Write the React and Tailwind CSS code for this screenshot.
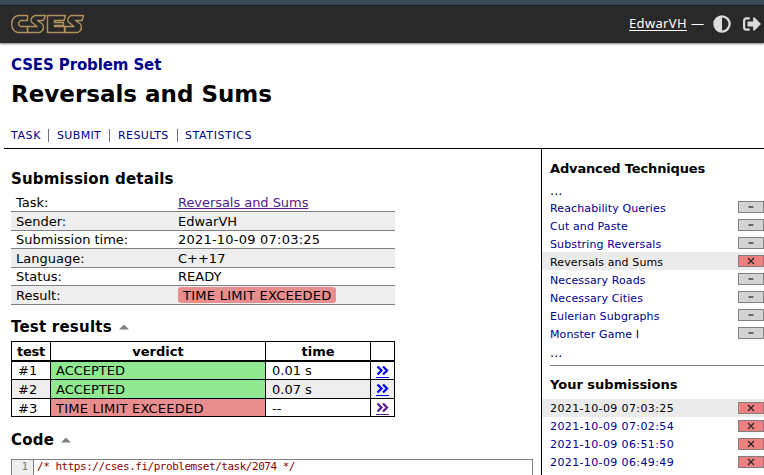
import React from "react";

const verdana = "font-['DejaVu_Sans',sans-serif]";

const details = [
  ["Task:", "Reversals and Sums", "h-[19px]"],
  ["Sender:", "EdwarVH", "h-[19px] bg-[#eeeeee]"],
  ["Submission time:", "2021-10-09 07:03:25", "h-[18px]"],
  ["Language:", "C++17", "h-[19px] bg-[#eeeeee]"],
  ["Status:", "READY", "h-[18px]"],
  ["Result:", "TIME LIMIT EXCEEDED", "h-[19px] bg-[#eeeeee]"],
];

const results = [
  { n: "#1", verdict: "ACCEPTED", time: "0.01 s", h: "h-[18px] leading-[17px]", link: "text-[#0000ee]" },
  { n: "#2", verdict: "ACCEPTED", time: "0.07 s", h: "h-[19px] leading-[19px]", alt: true, link: "text-[#0000ee]" },
  { n: "#3", verdict: "TIME LIMIT EXCEEDED", time: "--", h: "h-[18px] leading-[19px]", link: "text-[#551a8b]" },
];

const tasks = [
  "Reachability Queries",
  "Cut and Paste",
  "Substring Reversals",
  "Reversals and Sums",
  "Necessary Roads",
  "Necessary Cities",
  "Eulerian Subgraphs",
  "Monster Game I",
];

const submissions = [
  "2021-10-09 07:03:25",
  "2021-10-09 07:02:54",
  "2021-10-09 06:51:50",
  "2021-10-09 06:49:49",
];

function Logo() {
  return (
    <svg width="74" height="21" viewBox="0 0 74 21" fill="none" stroke="#b0925f" strokeWidth="1.4" strokeLinejoin="round">
      <path d="M16.500 1.500H7Q0.700 3 0.700 10Q1 17.500 7 18.500H16.500V12.500H9.500Q5.500 10 9.500 6.500H16.500Z" />
      <path d="M34.500 1.500H24Q18.500 4 20.500 8L26 12.500H16.500V18.500H29Q34.500 15 31.500 10L26.500 6.500H32.500Z" />
      <path d="M36.500 1.500H54.500L53 6.500H43.500V8.500H52.500V11.500H43.500V12.500H54V18.500H36.500Z" />
      <path d="M72.500 1.500H60Q55.500 4 57.500 8L63 12.500H53.500V18.500H67Q72.500 15 69.500 10L64.500 6.500H71Z" />
    </svg>
  );
}

function Header() {
  return (
    <header>
      <div className="h-[5px] bg-[#3a4754]" />
      <div className="flex h-[38px] items-center border-t border-[#1b1b1b] bg-[#292929] pl-[11px] shadow-[0_1px_2px_rgba(0,0,0,0.5)]">
        <Logo />
        <div className="ml-auto flex items-center pr-[3px] font-['Noto_Sans',sans-serif] text-[13px] text-white">
          <a className="-mt-px tracking-[0.35px] underline underline-offset-2">EdwarVH</a>
          <span className="-mt-px ml-1">—</span>
          <svg className="-mt-px ml-[9px]" width="18" height="18" viewBox="0 0 512 512" fill="#dcdcdc">
            <path d="M8 256a248 248 0 1 0 496 0 248 248 0 1 0-496 0zm248 184V72a184 184 0 0 1 0 368z" />
          </svg>
          <svg className="-mt-px ml-[12px]" width="18" height="18" viewBox="0 0 512 512" fill="#dcdcdc">
            <path d="M497 273L329 441c-15 15-41 4.500-41-17v-96H152c-13.300 0-24-10.700-24-24v-96c0-13.300 10.700-24 24-24h136V88c0-21.400 25.900-32 41-17l168 168c9.300 9.400 9.300 24.600 0 34zM192 436v-40c0-6.600-5.400-12-12-12H96c-17.700 0-32-14.300-32-32V160c0-17.700 14.300-32 32-32h84c6.600 0 12-5.400 12-12V76c0-6.600-5.400-12-12-12H96c-53 0-96 43-96 96v192c0 53 43 96 96 96h84c6.600 0 12-5.400 12-12z" />
          </svg>
        </div>
      </div>
    </header>
  );
}

function Row({ label, active, fail, spacing }) {
  return (
    <div className={`flex h-[18px] items-center pl-2 text-[11px] ${active ? "bg-[#ebebeb] text-black" : "text-[#00008b]"}`}>
      <span className={`leading-4 ${spacing}`}>{label}</span>
      <span className={`ml-auto mb-px flex h-3 w-[26px] items-center justify-center border border-[#808080] ${fail ? "bg-[#f08080]" : "bg-[#d3d3d3]"}`}>
        <svg width="8" height="8" viewBox="0 0 8 8" stroke="#222" strokeWidth="1.2">
          {fail ? <path d="M1 1L7 7M7 1L1 7" /> : <path d="M1.500 4H6.500" />}
        </svg>
      </span>
    </div>
  );
}

function Up() {
  return (
    <svg width="10" height="6" viewBox="0 0 10 6" fill="#808080">
      <path d="M0 5.500L5 0.500L10 5.500Z" />
    </svg>
  );
}

export default function App() {
  return (
    <div className={`h-[475px] w-[764px] overflow-hidden bg-white text-black ${verdana}`}>
      <Header />
      <div className="flex h-[105px] flex-col pl-[11px] pt-[13px]">
        <div className="text-[15px] font-bold leading-[19px] tracking-[-0.12px] text-[#00008b]">CSES Problem Set</div>
        <h1 className="mt-[4px] text-[23px] font-bold leading-[30px]">Reversals and Sums</h1>
        <nav className="mt-[19px] flex items-center text-[11px] leading-[15px] text-[#00008b]">
          <a className="w-[37px] tracking-[0.6px]">TASK</a><i className="h-[13px] w-px bg-gray-500" />
          <a className="w-[60px] pl-[8px] tracking-[0.35px]">SUBMIT</a><i className="h-[13px] w-px bg-gray-500" />
          <a className="w-[67px] pl-[8px] tracking-[0.4px]">RESULTS</a><i className="h-[13px] w-px bg-gray-500" />
          <a className="pl-[7px] tracking-[0.6px]">STATISTICS</a>
        </nav>
      </div>
      <div className="ml-1 flex h-[327px] border-t border-black">
        <main className="w-[537px] pl-[7px]">
          <h2 className="pt-[20px] text-[15px] font-bold leading-[20px] tracking-[0.17px]">Submission details</h2>
          <div className="mt-[4px] w-[384px] text-[13px]">
            {details.map(([k, v, c], i) => (
              <div key={k} className={`flex items-center border-b border-[#808080] pl-[5px] leading-[18px] ${c}`}>
                <span className={`w-[162px] ${i === 2 ? "" : "pt-px"}`}>{k}</span>
                {i === 0 ? <a className="pt-px tracking-[-0.05px] text-[#551a8b] underline">{v}</a>
                  : i === 5 ? <span className="flex h-4 w-[158px] items-center rounded-[3px] bg-[#e88e8e] pl-[5px] pt-px tracking-[0.27px]">{v}</span>
                  : <span className={i === 2 ? "tracking-[0.22px]" : "pt-px"}>{v}</span>}
              </div>
            ))}
          </div>
          <h2 className="mt-[12px] flex items-center gap-[7px] text-[15px] font-bold leading-[20px] tracking-[0.22px]"><span>Test results</span><Up /></h2>
          <div className="mt-[4px] w-[384px] border-l border-t border-black text-[13px]">
            <div className="grid h-[20px] grid-cols-[39px_215px_105px_24px] border-b-2 border-black text-center font-bold leading-[20px]">
              {["test", "verdict", "time", ""].map((t) => <span key={t} className={`h-[18px] border-r border-black ${t === "test" ? "tracking-[-0.3px]" : ""}`}>{t}</span>)}
            </div>
            {results.map((r) => (
              <div key={r.n} className={`grid grid-cols-[39px_215px_105px_24px] border-b border-black ${r.h} ${r.alt ? "bg-[#eeeeee]" : ""}`}>
                <span className="overflow-hidden border-r border-black pl-[6px]">{r.n}</span>
                <span className={`overflow-hidden border-r border-black pl-[5px] ${r.verdict === "ACCEPTED" ? "bg-[#90e890]" : "bg-[#e88e8e] tracking-[0.22px]"}`}>{r.verdict}</span>
                <span className="overflow-hidden border-r border-black pl-[6px]">{r.time}</span>
                <a className={`flex flex-col items-center border-r border-black pt-[4px] ${r.link}`}>
                  <svg width="13" height="12" viewBox="0 0 13 12" fill="none" stroke="currentColor"><path strokeWidth="2.2" d="M1.500 0.500L5.500 4.500L1.500 8.500M7 0.500L11 4.500L7 8.500" /><path d="M0 11.500H13" /></svg>
                </a>
              </div>
            ))}
          </div>
          <h2 className="mt-[13px] flex items-center gap-[7px] text-[15px] font-bold leading-[20px] tracking-[0.22px]"><span>Code</span><Up /></h2>
          <div className="mt-[9px] flex h-[30px] w-[522px] border border-[#808080] font-['DejaVu_Sans_Mono',monospace] text-[11px] leading-[14px]">
            <span className="w-[22px] border-r border-[#808080] bg-[#eeeeee] pr-[5px] text-right text-[#808080]">1</span>
            <span className="pl-[3px] tracking-[-0.48px] text-[#880000]">/* https://cses.fi/problemset/task/2074 */</span>
          </div>
        </main>
        <aside className="flex-1 border-l border-black">
          <h4 className="pl-2 pt-[11px] text-[13px] font-bold leading-[18px] tracking-[-0.15px]">Advanced Techniques</h4>
          <div className="mt-[3px] h-[17px] pl-2 text-[13px] leading-[20px]">...</div>
          {tasks.map((t) => <Row key={t} label={t} spacing="pt-[4px] tracking-[0.12px]" active={t === "Reversals and Sums"} fail={t === "Reversals and Sums"} />)}
          <div className="h-[23px] pl-2 text-[13px] leading-[22px]">...</div>
          <div className="ml-2 border-t border-[#808080]" />
          <h4 className="h-[33px] pl-2 pt-[10px] text-[13px] font-bold leading-[18px]">Your submissions</h4>
          {submissions.map((t, i) => <Row key={t} label={t} spacing="pt-[2px] tracking-[0.38px]" active={i === 0} fail />)}
        </aside>
      </div>
    </div>
  );
}
